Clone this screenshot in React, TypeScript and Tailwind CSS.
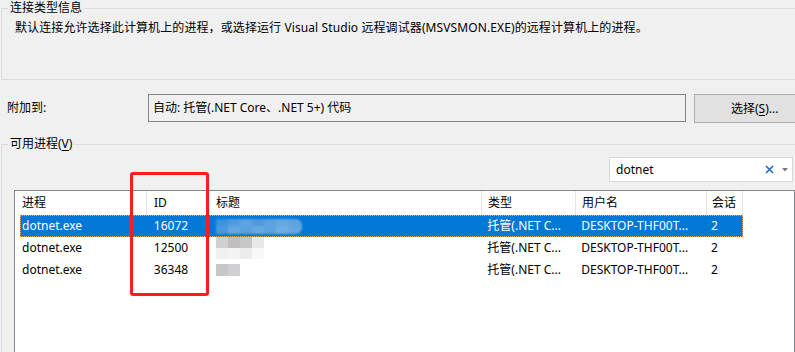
import React from "react";

const font = { fontFamily: '"Noto Sans", "Noto Sans CJK SC", sans-serif' };

type Row = { name: string; id: string; type: string; user: string; session: string; selected?: boolean; blur: "a" | "b" | "c" };

const rows: Row[] = [
  { name: "dotnet.exe", id: "16072", type: "托管(.NET C...", user: "DESKTOP-THF00T...", session: "2", selected: true, blur: "a" },
  { name: "dotnet.exe", id: "12500", type: "托管(.NET C...", user: "DESKTOP-THF00T...", session: "2", blur: "b" },
  { name: "dotnet.exe", id: "36348", type: "托管(.NET C...", user: "DESKTOP-THF00T...", session: "2", blur: "c" },
];

function Blur({ kind }: { kind: "a" | "b" | "c" }) {
  if (kind === "a") {
    return (
      <div className="flex flex-col blur-[1px]">
        <div className="flex h-[7px]">
          <div className="w-[12px] bg-[#3d92dd]" />
          <div className="w-[12px] bg-[#4f9be0]" />
          <div className="w-[12px] bg-[#5ea4e2]" />
          <div className="w-[12px] bg-[#4e9ade]" />
          <div className="w-[12px] bg-[#5ca3e1]" />
          <div className="w-[12px] bg-[#67a9e3]" />
          <div className="w-[14px] rounded-tr-[6px] bg-[#5fa4e1]" />
        </div>
        <div className="flex h-[8px]">
          <div className="w-[12px] bg-[#4a98de]" />
          <div className="w-[12px] bg-[#63a7e3]" />
          <div className="w-[12px] bg-[#5aa1e0]" />
          <div className="w-[12px] bg-[#66a8e2]" />
          <div className="w-[12px] bg-[#5ea3e0]" />
          <div className="w-[12px] bg-[#6eade4]" />
          <div className="w-[14px] rounded-br-[6px] bg-[#62a6e2]" />
        </div>
      </div>
    );
  }
  if (kind === "b") {
    return (
      <div className="flex flex-col blur-[0.5px]">
        <div className="flex h-[11px]">
          <div className="w-[12px] bg-[#d0d0d0]" />
          <div className="w-[12px] bg-[#c2bebe]" />
          <div className="w-[12px] bg-[#c6c8c8]" />
          <div className="w-[12px] bg-[#e8e8ea]" />
        </div>
        <div className="flex h-[11px]">
          <div className="w-[12px] bg-[#f0f0f0]" />
          <div className="w-[12px] bg-[#f3f3f3]" />
          <div className="w-[12px] bg-[#ececec]" />
          <div className="w-[12px] bg-[#f8f8f8]" />
        </div>
      </div>
    );
  }
  return (
    <div className="flex h-[12px] blur-[0.5px]">
      <div className="w-[12px] bg-[#c7c6c9]" />
      <div className="w-[12px] bg-[#d0d0d2]" />
    </div>
  );
}

export default function App() {
  return (
    <div style={font} className="relative h-[352px] w-[795px] overflow-hidden bg-[#f0f0f0] text-[12px] text-black">
      {/* connection type info group */}
      <fieldset className="ml-[1px] h-[80px] w-[820px] border border-[#dcdcdc]">
        <legend className="ml-[6px] px-[2px] leading-[16px]">连接类型信息</legend>
        <p className="mt-[4px] pl-[13px] leading-[16px] tracking-[0.1px]">
          默认连接允许选择此计算机上的进程，或选择运行 Visual Studio 远程调试器(MSVSMON.EXE)的远程计算机上的进程。
        </p>
      </fieldset>

      {/* attach to row */}
      <div className="mt-[14px] flex w-[830px] items-start">
        <div className="flex h-[28px] w-[148px] shrink-0 items-center pl-[7px]">附加到:</div>
        <div className="flex h-[28px] w-[538px] shrink-0 items-center border border-[#858585] bg-[#f0f0f0] pl-[4px]">
          自动: 托管(.NET Core、.NET 5+) 代码
        </div>
        <div className="ml-[8px] flex h-[29px] w-[130px] shrink-0 items-center border border-[#adadad] bg-[#e1e1e1] pl-[36px]">
          选择(<span className="underline underline-offset-2">S</span>)...
        </div>
      </div>

      {/* available processes group */}
      <fieldset className="ml-[1px] mt-[13px] h-[260px] w-[820px] border border-[#dcdcdc]">
        <legend className="ml-[6px] px-[2px] leading-[16px]">可用进程(<span className="underline underline-offset-2">V</span>)</legend>
        <div className="w-[793px]">
          <div className="mt-[5px] flex justify-end pr-[2px]">
            <div className="flex h-[25px] w-[184px] items-center border border-[#d9d9d9] bg-white pl-[6px] pr-[4px]">
              <span className="flex-1">dotnet</span>
              <svg width="9" height="9" viewBox="0 0 9 9" className="mr-[8px]">
                <path d="M1 1 L8 8 M8 1 L1 8" stroke="#1c6ec4" strokeWidth="1.6" />
              </svg>
              <svg width="6" height="4" viewBox="0 0 6 4">
                <path d="M0 0 L6 0 L3 3.5 Z" fill="#7a7a7a" />
              </svg>
            </div>
          </div>

          {/* table */}
          <div className="ml-[12px] mt-[8px] h-[200px] w-[781px] border border-[#828790] bg-white">
            <div className="flex h-[24px] items-center">
              <div className="flex h-full w-[132px] items-center border-r border-[#e5e5e5] pl-[7px]">进程</div>
              <div className="flex h-full w-[61px] items-center border-r border-[#e5e5e5] pl-[7px]">ID</div>
              <div className="flex h-full w-[274px] items-center border-r border-[#e5e5e5] pl-[8px]">标题</div>
              <div className="flex h-full w-[94px] items-center border-r border-[#e5e5e5] pl-[6px]">类型</div>
              <div className="flex h-full w-[131px] items-center border-r border-[#e5e5e5] pl-[6px]">用户名</div>
              <div className="flex h-full w-[36px] items-center border-r border-[#e5e5e5] pl-[5px]">会话</div>
            </div>
            <div className="ml-[5px] flex flex-col">
              {rows.map((r) => (
                <div
                  key={r.id}
                  className={
                    r.selected
                      ? "flex h-[22px] w-[723px] items-center border border-dotted border-[#e9a867] bg-[#0078d7] text-white"
                      : "flex h-[22px] w-[723px] items-center border border-transparent"
                  }
                >
                  <div className="w-[126px] pl-[1px]">{r.name}</div>
                  <div className="w-[61px] pl-[7px]">{r.id}</div>
                  <div className="flex w-[274px] items-center pl-[8px]">
                    <Blur kind={r.blur} />
                  </div>
                  <div className="w-[94px] pl-[6px]">{r.type}</div>
                  <div className="w-[131px] pl-[6px]">{r.user}</div>
                  <div className="w-[36px] pl-[5px]">{r.session}</div>
                </div>
              ))}
            </div>
          </div>
        </div>
      </fieldset>

      {/* red annotation box */}
      <div className="absolute left-[130px] top-[172px] h-[124px] w-[79px] rounded-[3px] border-[3px] border-[#ff1c1c]" />
    </div>
  );
}
